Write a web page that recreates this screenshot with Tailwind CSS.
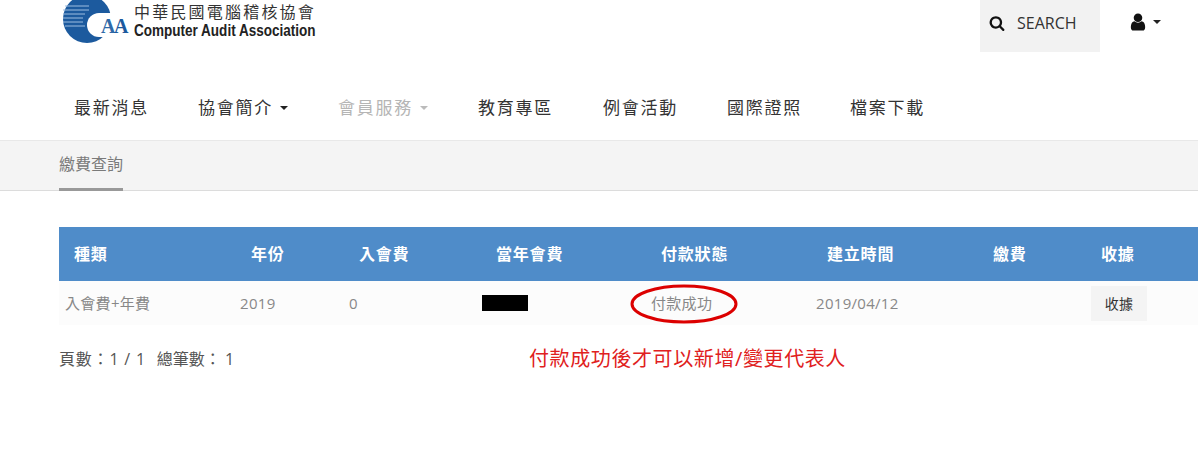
<!DOCTYPE html>
<html lang="zh-Hant">
<head>
  <meta charset="UTF-8">
  <title>繳費查詢</title>
  <script src="https://cdn.jsdelivr.net/npm/@tailwindcss/browser@4"></script>
</head>
<body class="bg-white font-['Open_Sans','Noto_Sans_CJK_TC',sans-serif] overflow-hidden">
  <!-- Header -->
  <header class="h-[140px]">
    <div class="flex items-start h-[52px]">
      <!-- Logo -->
      <div class="flex w-[980px] h-[52px] pl-[63px]">
        <svg class="w-[70px] h-[46px] shrink-0" viewBox="0 0 70 46">
          <circle cx="24" cy="19" r="24" fill="#1c5a9e"/>
          <circle cx="36" cy="25" r="12" fill="#fff"/>
          <rect x="36" y="13" width="34" height="24" fill="#fff"/>
          <path d="M2 6h24M0 10h26M0 14h22M0 18h20M0 22h20M2 26h20" stroke="#9dbde0" stroke-width="1"/>
          <text x="38" y="33" font-family="Liberation Serif" font-weight="700" font-size="20" fill="#2f6aa8">A</text>
          <text x="51" y="33" font-family="Liberation Serif" font-weight="700" font-size="20" fill="#1c5a9e">A</text>
        </svg>
        <div class="ml-[1px]">
          <div class="text-[16px] leading-[19px] tracking-[2.2px] text-[#333] mt-[3px] whitespace-nowrap">中華民國電腦稽核協會</div>
          <div class="text-[16px] leading-[18px] font-bold text-[#222] font-['Liberation_Sans'] whitespace-nowrap origin-left scale-x-[0.845]">Computer Audit Association</div>
        </div>
      </div>
      <!-- Search -->
      <div class="flex items-center w-[120px] h-[52px] bg-[#f2f2f2] pl-[9px] pb-[6px] text-[16px] text-[#333]">
        <svg class="w-[16px] h-[16px]" viewBox="0 0 1792 1792" fill="#111"><path d="M1216 832q0-185-131.500-316.500t-316.500-131.500-316.500 131.500-131.500 316.500 131.500 316.500 316.500 131.500 316.500-131.500 131.500-316.500zm512 832q0 52-38 90t-90 38q-54 0-90-38l-343-342q-179 124-399 124-143 0-273.500-55.500t-225-150-150-225-55.500-273.500 55.500-273.500 150-225 225-150 273.500-55.500 273.500 55.500 225 150 150 225 55.500 273.500q0 220-124 399l343 343q37 37 37 90z"/></svg>
        <span class="ml-[12px]">SEARCH</span>
      </div>
      <!-- User -->
      <div class="flex items-center h-[43px] pl-[28px]">
        <svg class="w-[20px] h-[20px]" viewBox="0 0 1792 1792" fill="#111"><path d="M1536 1399q0 109-62.500 187t-150.500 78h-854q-88 0-150.500-78t-62.500-187q0-85 8.500-160.500t31.500-152 58.500-131 94-89 134.500-34.500q131 128 313 128t313-128q76 0 134.500 34.500t94 89 58.500 131 31.500 152 8.500 160.500zm-256-887q0 159-112.500 271.500t-271.500 112.500-271.500-112.500-112.500-271.500 112.500-271.500 271.500-112.500 271.500 112.500 112.500 271.500z"/></svg>
        <span class="ml-[5px] border-x-[4px] border-x-transparent border-t-[4px] border-t-[#222]"></span>
      </div>
    </div>
    <!-- Nav -->
    <nav class="flex items-center h-[24px] mt-[44px] pl-[74px] text-[17px] tracking-[1.75px] text-[#333] whitespace-nowrap">
      <a class="w-[124px]">最新消息</a>
      <a class="flex items-center w-[140px]">協會簡介<span class="ml-[7px] border-x-[4px] border-x-transparent border-t-[4px] border-t-[#222]"></span></a>
      <a class="flex items-center w-[140px] text-[#b5b5b5]">會員服務<span class="ml-[7px] border-x-[4px] border-x-transparent border-t-[4px] border-t-[#bbb]"></span></a>
      <a class="w-[125px]">教育專區</a>
      <a class="w-[124px]">例會活動</a>
      <a class="w-[123px]">國際證照</a>
      <a>檔案下載</a>
    </nav>
  </header>

  <!-- Sub nav -->
  <div class="h-[51px] bg-[#f4f4f4] border-y border-y-[#e8e8e8] border-b-[#dcdcdc] pl-[59px]">
    <div class="w-[64px] h-[50px] border-b-[3px] border-b-[#999] pt-[11px] text-[16px] leading-[24px] text-[#7a7a7a] whitespace-nowrap">繳費查詢</div>
  </div>

  <!-- Table -->
  <main class="pl-[59px] pt-[36px]">
    <table class="table-fixed w-[1139px] border-collapse">
      <colgroup>
        <col class="w-[175px]"><col class="w-[109px]"><col class="w-[133px]"><col class="w-[169px]"><col class="w-[165px]"><col class="w-[166px]"><col class="w-[109px]"><col class="w-[113px]">
      </colgroup>
      <thead>
        <tr class="h-[54px] bg-[#4f8cc9] text-white text-[16px] font-bold tracking-[0.8px] text-left">
          <th class="pl-[15px]">種類</th>
          <th class="pl-[17px]">年份</th>
          <th class="pl-[16px]">入會費</th>
          <th class="pl-[20px]">當年會費</th>
          <th class="pl-[16px]">付款狀態</th>
          <th class="pl-[17px]">建立時間</th>
          <th class="pl-[17px]">繳費</th>
          <th class="pl-[16px]">收據</th>
        </tr>
      </thead>
      <tbody>
        <tr class="h-[44px] bg-[#fcfcfc] text-[15px] tracking-[0.3px] text-[#888]">
          <td class="pl-[6px]">入會費+年費</td>
          <td class="pl-[6px]">2019</td>
          <td class="pl-[6px]">0</td>
          <td class="pl-[6px]"><div class="w-[46px] h-[16px] bg-black"></div></td>
          <td class="pl-[6px] relative">
            付款成功
            <svg class="absolute left-[-15px] top-[3px] w-[108px] h-[40px]" viewBox="0 0 108 40" fill="none"><ellipse cx="54" cy="20" rx="52" ry="18" stroke="#dc0000" stroke-width="3"/></svg>
          </td>
          <td class="pl-[6px]">2019/04/12</td>
          <td></td>
          <td class="pl-[6px]"><button class="w-[56px] h-[35px] bg-[#f4f4f4] text-[#333] text-[14px]">收據</button></td>
        </tr>
      </tbody>
    </table>

    <div class="flex items-center mt-[22px] h-[24px] whitespace-nowrap">
      <div class="w-[470px] text-[16px] text-[#555]"><span class="tracking-[0.8px]">頁數：1 / 1 &nbsp;</span><span class="ml-[1px]">總筆數： 1</span></div>
      <div class="text-[20px] tracking-[0.6px] text-[#e02020]">付款成功後才可以新增/變更代表人</div>
    </div>
  </main>
</body>
</html>
